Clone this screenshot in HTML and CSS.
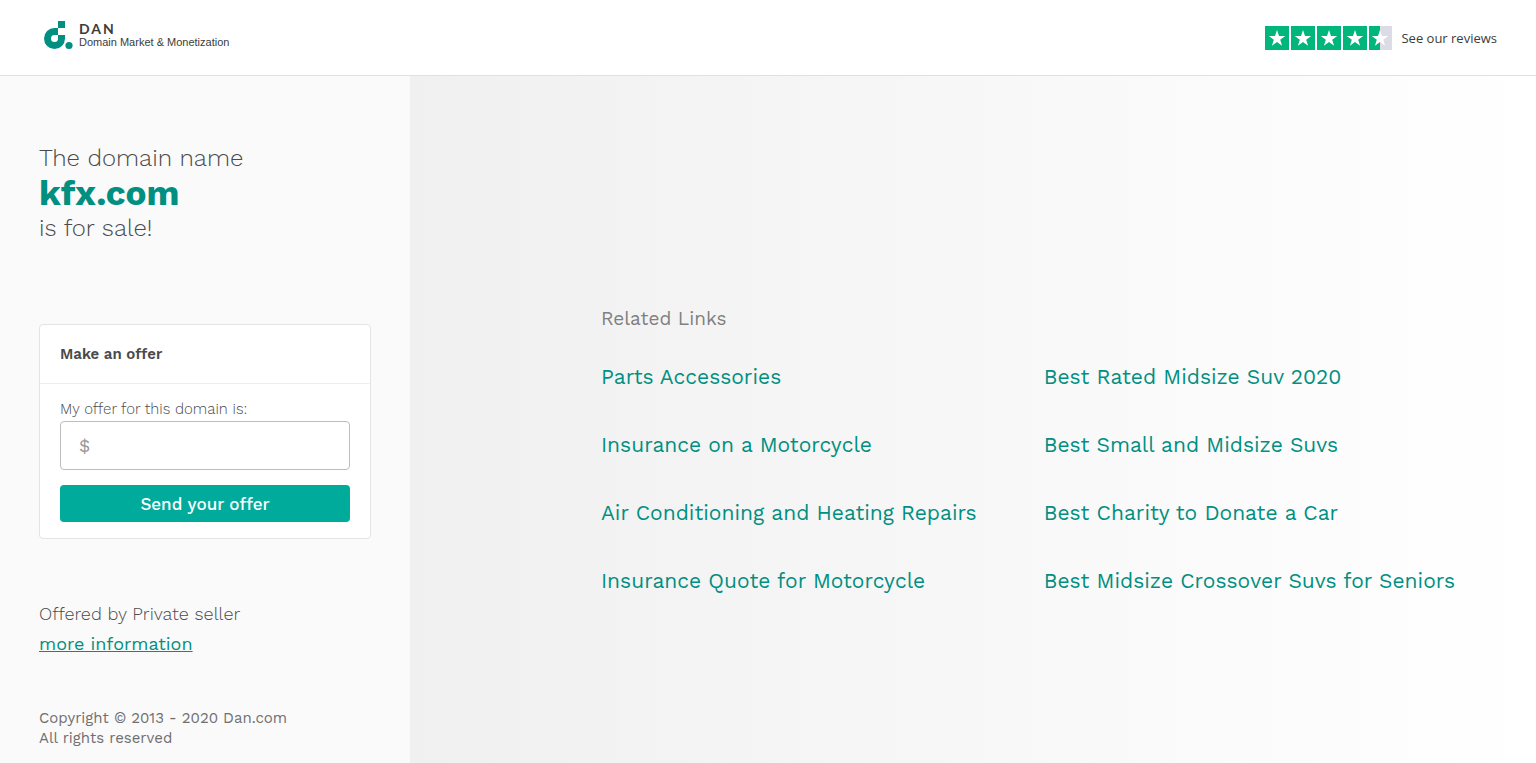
FILE: index.html
```html
<!DOCTYPE html>
<html lang="en">
<head>
    <meta charset="UTF-8">
    <meta name="viewport" content="width=device-width, initial-scale=1.0">
    <title>kfx.com is for sale!</title>
    <link rel="stylesheet" href="styles.css">
</head>
<body>

    <header class="header">
        <a class="logo" href="#">
            <svg class="logo-mark" width="30" height="30" viewBox="0 0 30 30" fill="#008f81" aria-hidden="true">
                <path d="M15 1h7v7h-7z"/>
                <path d="M15 8h-3.500A10.500 10.500 0 1 0 22 18.500V15h-7v3.500A3.500 3.500 0 1 1 11.500 15H15z"/>
                <circle cx="26" cy="25.500" r="3.600"/>
            </svg>
            <span class="logo-text">
                <span class="logo-name">DAN</span>
                <span class="logo-tagline">Domain Market &amp; Monetization</span>
            </span>
        </a>
        <a class="reviews" href="#">
            <svg class="stars" width="127" height="24" viewBox="0 0 127 24" aria-hidden="true">
                <defs>
                    <path id="star" fill="#fff" d="M12 4l2 6h6.200l-5 3.700 1.900 6L12 16l-5.100 3.700 1.900-6-5-3.700H10z"/>
                </defs>
                <path fill="#00b67a" d="M0 0h24v24H0zM26 0h24v24H26zM52 0h24v24H52zM78 0h24v24H78zM104 0h11v24h-11z"/>
                <path fill="#dcdce6" d="M115 0h12v24h-12z"/>
                <use href="#star"/>
                <use href="#star" x="26"/>
                <use href="#star" x="52"/>
                <use href="#star" x="78"/>
                <use href="#star" x="103"/>
            </svg>
            <span>See our reviews</span>
        </a>
    </header>

    <div class="page">
        <aside class="sidebar">
            <h1 class="title">
                The domain name
                <strong class="domain">kfx.com</strong>
                is for sale!
            </h1>

            <form class="offer">
                <h2 class="offer-title">Make an offer</h2>
                <div class="offer-body">
                    <label class="offer-label" for="offer">My offer for this domain is:</label>
                    <input class="offer-input" id="offer" type="text" placeholder="$">
                    <button class="offer-btn" type="button">Send your offer</button>
                </div>
            </form>

            <div class="seller">
                <p>Offered by Private seller</p>
                <a href="#">more information</a>
            </div>

            <footer class="footer">
                Copyright © 2013 - 2020 Dan.com<br>
                All rights reserved
            </footer>
        </aside>

        <main class="links">
            <h2 class="links-title">Related Links</h2>
            <div class="links-grid">
                <a href="#">Parts Accessories</a>
                <a href="#">Best Rated Midsize Suv 2020</a>
                <a href="#">Insurance on a Motorcycle</a>
                <a href="#">Best Small and Midsize Suvs</a>
                <a href="#">Air Conditioning and Heating Repairs</a>
                <a href="#">Best Charity to Donate a Car</a>
                <a href="#">Insurance Quote for Motorcycle</a>
                <a href="#">Best Midsize Crossover Suvs for Seniors</a>
            </div>
        </main>
    </div>

</body>
</html>
```
FILE: styles.css
```css
* {
    box-sizing: border-box;
}

body {
    margin: 0;
    min-height: 100vh;
    display: flex;
    flex-direction: column;
    font-family: 'Work Sans', Inter, sans-serif;
    background: #fff;
    color: #4a4a4a;
}

h1, h2, p { margin: 0; }

.header {
    display: flex;
    justify-content: space-between;
    align-items: center;
    height: 76px;
    padding: 0 39px 0 43px;
    border-bottom: 1px solid #e0e0e0;
}
.header a { color: #3c3c3c; text-decoration: none; }

.logo { display: flex; align-items: center; gap: 6px; padding-bottom: 6px; }
.logo-text { display: flex; flex-direction: column; }
.logo-name {
    font-family: Lato, sans-serif;
    font-size: 14px;
    line-height: 14px;
    font-weight: bold;
    letter-spacing: 2px;
}
.logo-tagline { font-family: 'Liberation Sans', Arial, sans-serif; font-size: 11px; line-height: 12px; }

.reviews {
    display: flex;
    align-items: center;
    gap: 9px;
    font-family: 'Segoe UI', 'Open Sans', sans-serif;
    font-size: 13px;
    font-weight: 500;
}

.page { display: flex; flex: 1; }

.sidebar {
    flex: 0 0 410px;
    padding: 64px 39px 15px;
    background: #fafafa;
}

.title { font-size: 24px; line-height: 36px; font-weight: 300; }
.domain {
    display: block;
    font-size: 35px;
    line-height: 34px;
    font-weight: 700;
    color: #008f81;
}

.offer {
    margin-top: 78px;
    background: #fff;
    border: 1px solid #e4e4e4;
    border-radius: 4px;
}
.offer-title {
    padding: 0 20px;
    font-size: 15px;
    line-height: 58px;
    font-weight: 600;
    border-bottom: 1px solid #eee;
}
.offer-body { display: flex; flex-direction: column; padding: 13px 20px 16px; }
.offer-label { font-size: 15px; line-height: 24px; font-weight: 300; }
.offer-input {
    height: 49px;
    padding: 0 18px;
    font: inherit;
    font-size: 18px;
    background: #fff;
    border: 1px solid #bdbdbd;
    border-radius: 4px;
}
.offer-input::placeholder { color: #999; }
.offer-btn {
    height: 37px;
    margin-top: 15px;
    font: inherit;
    font-size: 17px;
    font-weight: 500;
    color: #fff;
    background: #00ab9c;
    border: none;
    border-radius: 4px;
}

.seller { margin-top: 60px; font-size: 18px; line-height: 30px; font-weight: 300; }
.seller a { color: #008f81; font-weight: 400; }

.footer { margin-top: 49px; font-size: 15px; line-height: 20px; color: #707070; }

.links {
    flex: 1;
    padding: 228px 72px 40px 191px;
    background: linear-gradient(to right, #f0f0f0, #fff);
}
.links-title { font-size: 19px; line-height: 30px; font-weight: 400; color: #808080; }
.links-grid {
    display: grid;
    grid-template-columns: max-content max-content;
    gap: 38px 67px;
    margin-top: 28px;
    font-size: 21px;
    line-height: 30px;
}
.links-grid a { color: #008f81; text-decoration: none; }
```
